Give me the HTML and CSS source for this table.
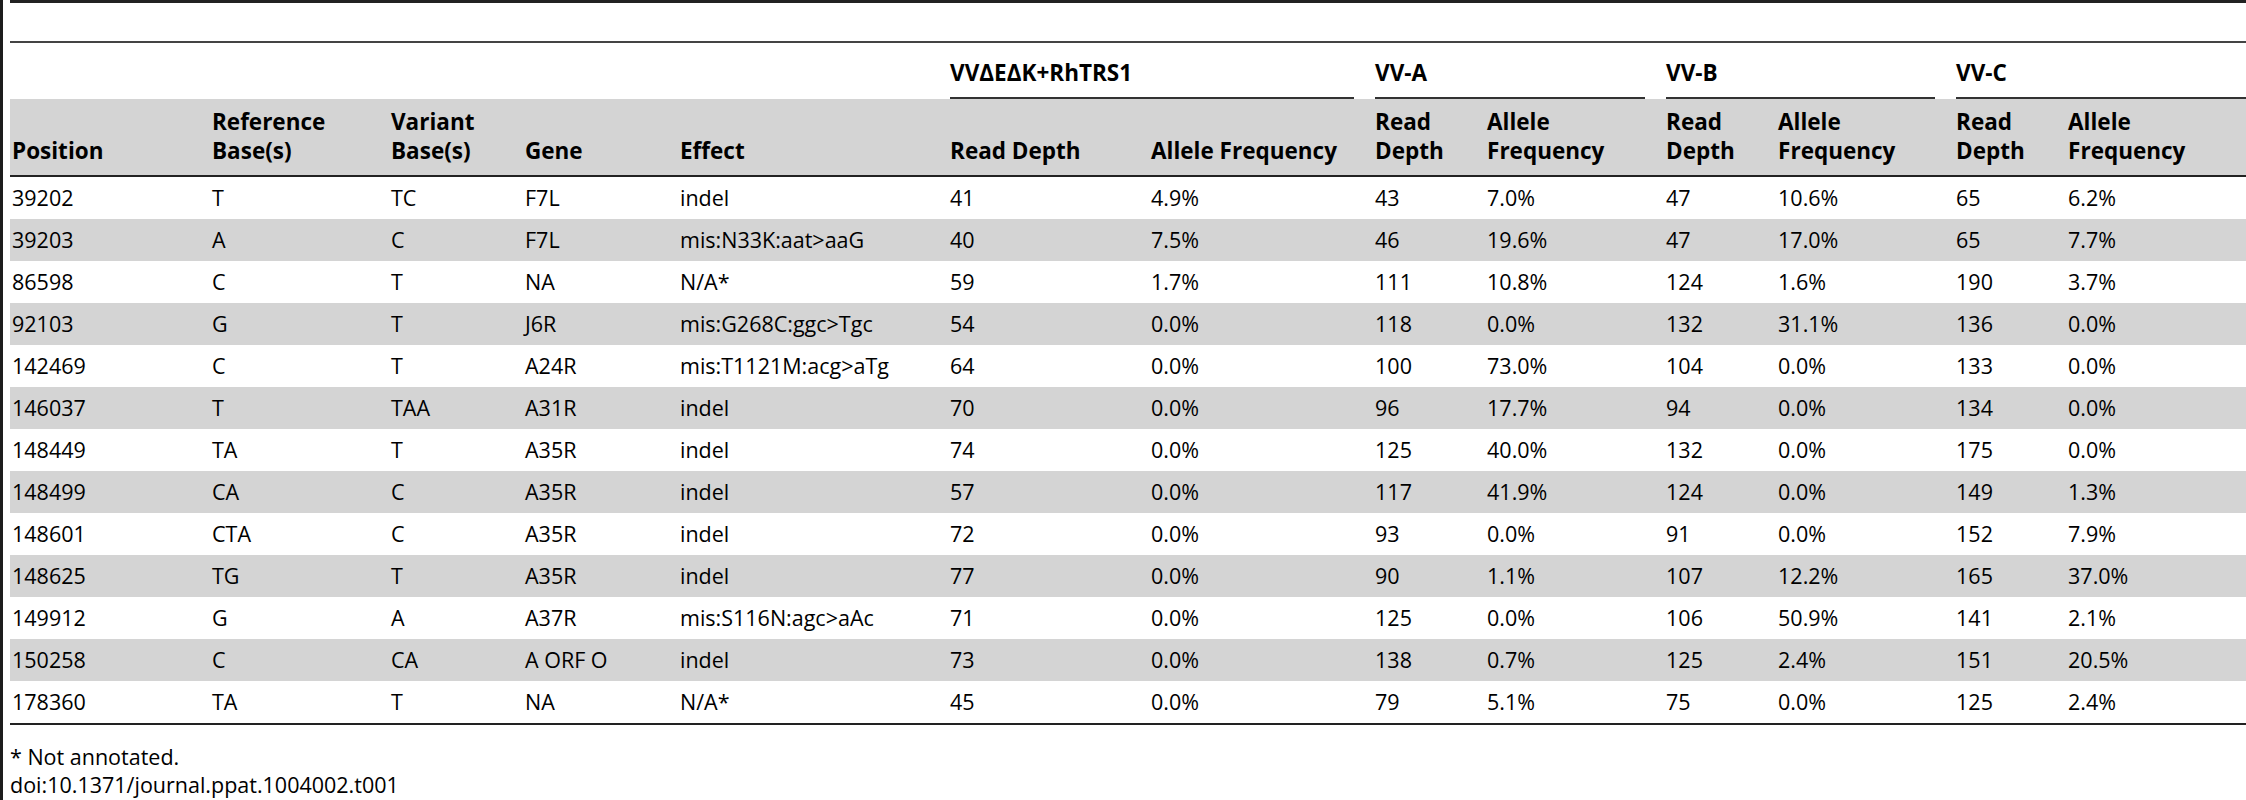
FILE: index.html
```html
<!DOCTYPE html>
<html>
<head>
<meta charset="utf-8">
<link rel="stylesheet" href="styles.css">
</head>
<body>
<div class="page">
  <div class="side-bar"></div>
  <div class="content">
    <div class="top-rule"></div>
    <div class="caption-space"></div>
    <table class="data">
      <colgroup>
        <col style="width:200px"><col style="width:179px"><col style="width:134px"><col style="width:155px"><col style="width:270px">
        <col style="width:201px"><col style="width:224px">
        <col style="width:112px"><col style="width:179px">
        <col style="width:112px"><col style="width:178px">
        <col style="width:112px"><col style="width:180px">
      </colgroup>
      <thead>
        <tr class="group-row">
          <th colspan="5"></th>
          <th colspan="2"><div class="group">VV&Delta;E&Delta;K+RhTRS1</div></th>
          <th colspan="2"><div class="group">VV-A</div></th>
          <th colspan="2"><div class="group">VV-B</div></th>
          <th colspan="2"><div class="group last">VV-C</div></th>
        </tr>
        <tr class="col-row">
          <th>Position</th>
          <th>Reference<br>Base(s)</th>
          <th>Variant<br>Base(s)</th>
          <th>Gene</th>
          <th>Effect</th>
          <th>Read Depth</th>
          <th>Allele Frequency</th>
          <th>Read<br>Depth</th>
          <th>Allele<br>Frequency</th>
          <th>Read<br>Depth</th>
          <th>Allele<br>Frequency</th>
          <th>Read<br>Depth</th>
          <th>Allele<br>Frequency</th>
        </tr>
      </thead>
      <tbody>
        <tr><td>39202</td><td>T</td><td>TC</td><td>F7L</td><td>indel</td><td>41</td><td>4.9%</td><td>43</td><td>7.0%</td><td>47</td><td>10.6%</td><td>65</td><td>6.2%</td></tr>
        <tr class="alt"><td>39203</td><td>A</td><td>C</td><td>F7L</td><td>mis:N33K:aat&gt;aaG</td><td>40</td><td>7.5%</td><td>46</td><td>19.6%</td><td>47</td><td>17.0%</td><td>65</td><td>7.7%</td></tr>
        <tr><td>86598</td><td>C</td><td>T</td><td>NA</td><td>N/A*</td><td>59</td><td>1.7%</td><td>111</td><td>10.8%</td><td>124</td><td>1.6%</td><td>190</td><td>3.7%</td></tr>
        <tr class="alt"><td>92103</td><td>G</td><td>T</td><td>J6R</td><td>mis:G268C:ggc&gt;Tgc</td><td>54</td><td>0.0%</td><td>118</td><td>0.0%</td><td>132</td><td>31.1%</td><td>136</td><td>0.0%</td></tr>
        <tr><td>142469</td><td>C</td><td>T</td><td>A24R</td><td>mis:T1121M:acg&gt;aTg</td><td>64</td><td>0.0%</td><td>100</td><td>73.0%</td><td>104</td><td>0.0%</td><td>133</td><td>0.0%</td></tr>
        <tr class="alt"><td>146037</td><td>T</td><td>TAA</td><td>A31R</td><td>indel</td><td>70</td><td>0.0%</td><td>96</td><td>17.7%</td><td>94</td><td>0.0%</td><td>134</td><td>0.0%</td></tr>
        <tr><td>148449</td><td>TA</td><td>T</td><td>A35R</td><td>indel</td><td>74</td><td>0.0%</td><td>125</td><td>40.0%</td><td>132</td><td>0.0%</td><td>175</td><td>0.0%</td></tr>
        <tr class="alt"><td>148499</td><td>CA</td><td>C</td><td>A35R</td><td>indel</td><td>57</td><td>0.0%</td><td>117</td><td>41.9%</td><td>124</td><td>0.0%</td><td>149</td><td>1.3%</td></tr>
        <tr><td>148601</td><td>CTA</td><td>C</td><td>A35R</td><td>indel</td><td>72</td><td>0.0%</td><td>93</td><td>0.0%</td><td>91</td><td>0.0%</td><td>152</td><td>7.9%</td></tr>
        <tr class="alt"><td>148625</td><td>TG</td><td>T</td><td>A35R</td><td>indel</td><td>77</td><td>0.0%</td><td>90</td><td>1.1%</td><td>107</td><td>12.2%</td><td>165</td><td>37.0%</td></tr>
        <tr><td>149912</td><td>G</td><td>A</td><td>A37R</td><td>mis:S116N:agc&gt;aAc</td><td>71</td><td>0.0%</td><td>125</td><td>0.0%</td><td>106</td><td>50.9%</td><td>141</td><td>2.1%</td></tr>
        <tr class="alt"><td>150258</td><td>C</td><td>CA</td><td>A ORF O</td><td>indel</td><td>73</td><td>0.0%</td><td>138</td><td>0.7%</td><td>125</td><td>2.4%</td><td>151</td><td>20.5%</td></tr>
        <tr class="last-row"><td>178360</td><td>TA</td><td>T</td><td>NA</td><td>N/A*</td><td>45</td><td>0.0%</td><td>79</td><td>5.1%</td><td>75</td><td>0.0%</td><td>125</td><td>2.4%</td></tr>
      </tbody>
    </table>
    <div class="notes">
      <div class="note">* Not annotated.</div>
      <div class="note">doi:10.1371/journal.ppat.1004002.t001</div>
    </div>
  </div>
</div>
</body>
</html>
```
FILE: styles.css
```css
* { box-sizing: border-box; }
html, body {
  margin: 0;
  padding: 0;
  background: #ffffff;
}
body {
  font-family: "Open Sans", "Liberation Sans", sans-serif;
  color: #000000;
  font-size: 21.5px;
}
.page {
  display: flex;
  width: 2246px;
  height: 800px;
  overflow: hidden;
}
.side-bar {
  width: 3px;
  flex: 0 0 3px;
  background: #1c1c1c;
}
.content {
  flex: 1;
  margin-left: 7px;
  min-width: 0;
}
.top-rule {
  height: 3px;
  background: #222222;
}
.caption-space {
  height: 40px;
  border-bottom: 2px solid #444444;
}
.data {
  width: 2236px;
  table-layout: fixed;
  border-collapse: separate;
  border-spacing: 0;
}
.data th, .data td {
  padding: 0 0 0 2px;
  text-align: left;
  white-space: nowrap;
}
.group-row th {
  height: 56px;
  vertical-align: bottom;
  font-weight: 700;
  font-size: 22.5px;
  line-height: 28px;
}
.group {
  border-bottom: 2px solid #333333;
  padding-bottom: 10px;
  margin-right: 19px;
}
.group.last { margin-right: 0; }
.col-row th {
  background: #d4d4d4;
  height: 78px;
  vertical-align: bottom;
  font-weight: 700;
  font-size: 22.5px;
  line-height: 29px;
  padding-bottom: 10px;
  border-bottom: 2px solid #222222;
}
.data tbody tr { height: 42px; }
.data td {
  line-height: 28px;
  vertical-align: middle;
}
.data tr.alt td { background: #d4d4d4; }
.data tr.last-row td { border-bottom: 2px solid #222222; height: 44px; }
.notes {
  margin-top: 18px;
  line-height: 28px;
}
```
